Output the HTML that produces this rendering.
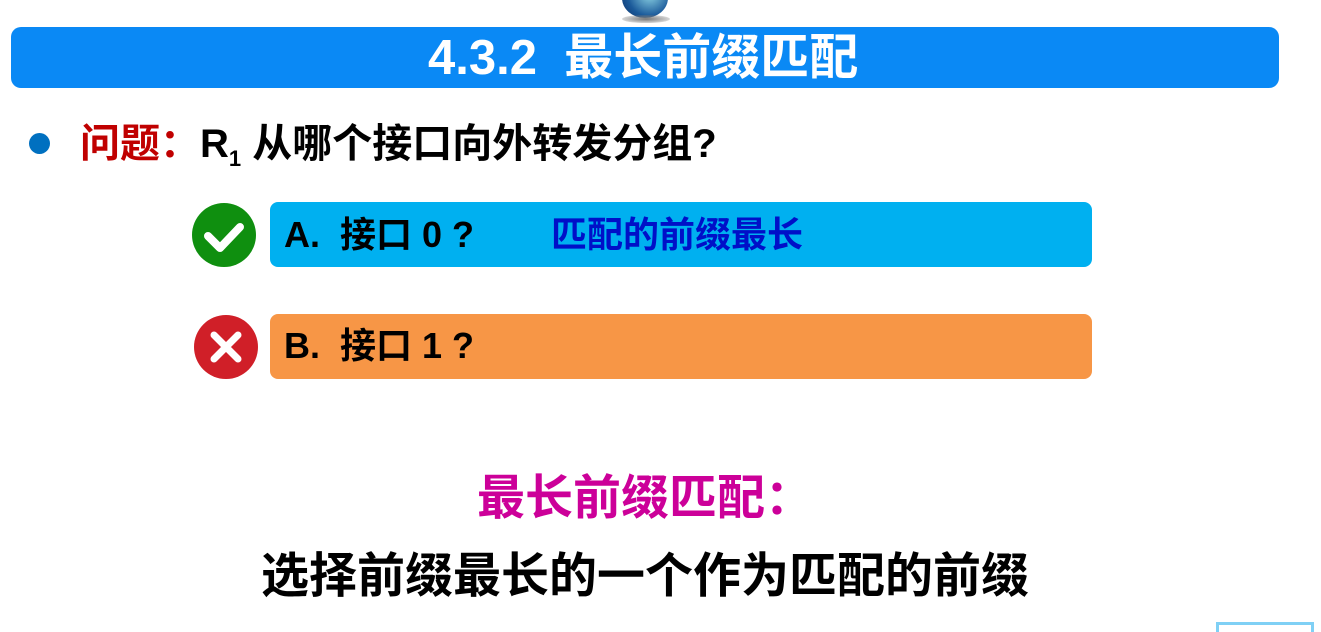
<!DOCTYPE html>
<html><head><meta charset="utf-8"><style>
body{margin:0;width:1321px;height:630px;background:#fff;position:relative;overflow:hidden;font-family:"Liberation Sans","Noto Sans CJK SC",sans-serif;font-weight:bold}
.a{position:absolute;white-space:nowrap}
</style></head><body>
<div class="a" style="left:622px;top:-22px;width:46px;height:40px;border-radius:50%;background:radial-gradient(circle at 60% 40%,#8fd6e6,#1b5a9a 60%,#0d2f66)"></div>
<div class="a" style="left:622px;top:15px;width:48px;height:8px;border-radius:50%;background:radial-gradient(#777,rgba(255,255,255,0))"></div>
<div class="a" style="left:11px;top:27px;width:1268px;height:61px;background:#0a89f5;border-radius:10px"></div>
<div class="a" style="left:428px;top:28px;color:#fff;font-size:49px;line-height:60px">4.3.2&nbsp; 最长前缀匹配</div>
<div class="a" style="left:29px;top:133px;width:21px;height:21px;border-radius:50%;background:#0070c0"></div>
<div class="a" style="left:80px;top:118px;font-size:40px;line-height:52px;color:#000"><span style="color:#c00000">问题：</span>R<sub style="font-size:22px">1</sub> 从哪个接口向外转发分组?</div>
<div class="a" style="left:270px;top:202px;width:822px;height:65px;background:#00b0f0;border-radius:8px"></div>
<div class="a" style="left:284px;top:210px;font-size:36px;line-height:50px;color:#000">A.&nbsp; 接口 0 ?</div>
<div class="a" style="left:551px;top:210px;font-size:36px;line-height:50px;color:#0010c8">匹配的前缀最长</div>
<div class="a" style="left:270px;top:314px;width:822px;height:65px;background:#f79646;border-radius:8px"></div>
<div class="a" style="left:284px;top:321px;font-size:36px;line-height:50px;color:#000">B.&nbsp; 接口 1 ?</div>
<svg class="a" style="left:190px;top:202px" width="70" height="180">
<circle cx="34" cy="33" r="32" fill="#0f8f0f"/>
<path d="M18 34 L30 46 L50 25" stroke="#fff" stroke-width="8" fill="none" stroke-linecap="round" stroke-linejoin="round"/>
<circle cx="36" cy="145" r="32" fill="#d01f28"/>
<path d="M24 133 L48 157 M48 133 L24 157" stroke="#fff" stroke-width="7" stroke-linecap="round"/>
</svg>
<div class="a" style="left:477px;top:468px;font-size:48px;line-height:62px;color:#cc0099">最长前缀匹配：</div>
<div class="a" style="left:261px;top:546px;font-size:48px;line-height:62px;color:#000">选择前缀最长的一个作为匹配的前缀</div>
<div class="a" style="left:1216px;top:622px;width:98px;height:10px;border:3px solid #7fd0f5;border-bottom:none;box-sizing:border-box"></div>
</body></html>
